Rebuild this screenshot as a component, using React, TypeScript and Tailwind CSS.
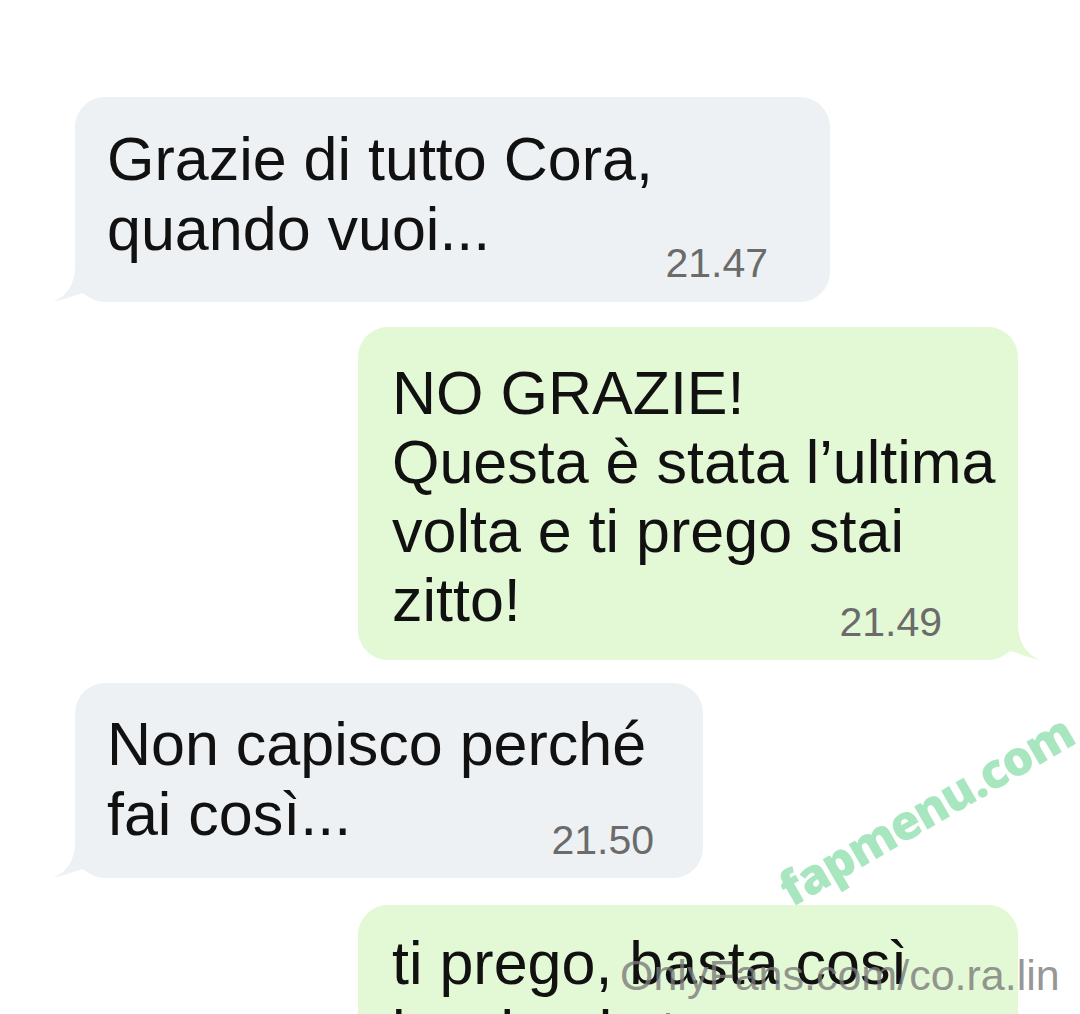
import React from 'react'

const font = { fontFamily: '"Liberation Sans", Arial, sans-serif' }

function TailLeft({ color }: { color: string }) {
    return (
        <svg className="absolute left-[-25px] bottom-0" width="60" height="45" viewBox="0 0 60 45">
            <path d="M25 0 L25 8 C25 28 16 40 2 45 C14 43 24 38 33 36 C40 41 48 44 60 45 L60 0 Z" fill={color} />
        </svg>
    )
}

function TailRight({ color }: { color: string }) {
    return (
        <svg className="absolute right-[-25px] bottom-0" width="60" height="45" viewBox="0 0 60 45">
            <path d="M35 0 L35 8 C35 28 44 40 58 45 C46 43 36 38 27 36 C20 41 12 44 0 45 L0 0 Z" fill={color} />
        </svg>
    )
}

export default function App() {
    return (
        <div className="relative w-[1080px] h-[1014px] overflow-hidden bg-white text-[#111]" style={font}>
            <div className="flex flex-col pt-[97px]">
                {/* incoming */}
                <div className="relative ml-[75px] w-[755px] rounded-[30px] bg-[#eef1f3] pl-[32px] pt-[27px] pb-[19px] pr-[20px]">
                    <TailLeft color="#eef1f3" />
                    <div className="relative text-[61px] leading-[70px] whitespace-nowrap">
                        <div>Grazie di tutto Cora,</div>
                        <div>quando vuoi...</div>
                    </div>
                    <div className="relative flex justify-end mr-[42px] mt-[-21px] text-[41px] leading-[40px] text-[#6b6b6b]">21.47</div>
                </div>

                {/* outgoing */}
                <div className="relative mt-[25px] ml-[358px] w-[660px] rounded-[30px] bg-[#e3f8d4] pl-[34px] pt-[32px] pb-[18px] pr-[20px]">
                    <TailRight color="#e3f8d4" />
                    <div className="relative text-[61px] leading-[69px] whitespace-nowrap">
                        <div>NO GRAZIE!</div>
                        <div>Questa è stata l’ultima</div>
                        <div>volta e ti prego stai</div>
                        <div>zitto!</div>
                    </div>
                    <div className="relative flex justify-end mr-[56px] mt-[-33px] text-[41px] leading-[40px] text-[#6b6b6b]">21.49</div>
                </div>

                <div className="relative mt-[23px] ml-[75px] w-[628px] rounded-[30px] bg-[#eef1f3] pl-[32px] pt-[26px] pb-[18px] pr-[20px]">
                    <TailLeft color="#eef1f3" />
                    <div className="relative text-[61px] leading-[70px] whitespace-nowrap">
                        <div>Non capisco perché</div>
                        <div>fai così...</div>
                    </div>
                    <div className="relative flex justify-end mr-[29px] mt-[-29px] text-[41px] leading-[40px] text-[#6b6b6b]">21.50</div>
                </div>

                <div className="relative mt-[27px] ml-[358px] w-[660px] rounded-[30px] bg-[#e3f8d4] pl-[34px] pt-[24px] pb-[40px] pr-[20px]">
                    <div className="text-[61px] leading-[69px] whitespace-nowrap">
                        <div>ti prego, basta così</div>
                        <div>lasciami stare</div>
                    </div>
                </div>
            </div>

            {/* watermarks */}
            <div
                className="absolute left-[783px] top-[868px] origin-left -rotate-[30deg] text-[48px] font-extrabold tracking-[-1px] text-[#a8e6c0] leading-none whitespace-nowrap"
                style={{ fontFamily: '"Open Sans", "Liberation Sans", sans-serif' }}
            >
                fapmenu.com
            </div>
            <div className="absolute left-[620px] top-[950px] text-[43px] leading-[50px] text-[#7a7a7a]/80 whitespace-nowrap">
                OnlyFans.com/co.ra.lin
            </div>
        </div>
    )
}
